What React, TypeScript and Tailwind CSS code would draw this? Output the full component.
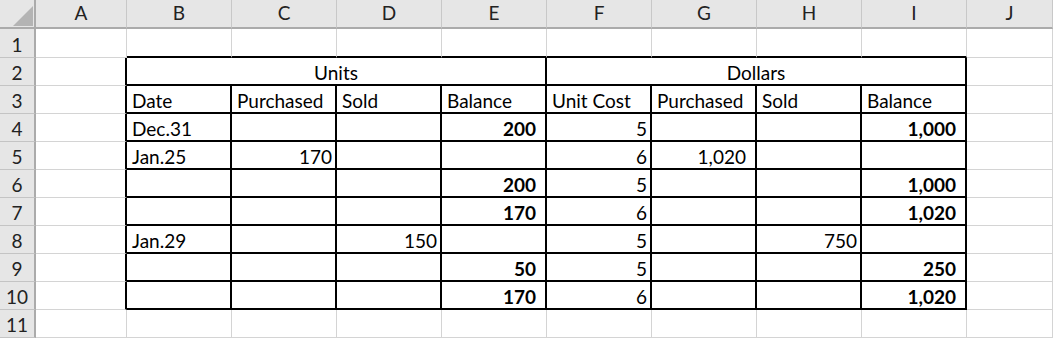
import clsx from 'clsx'

type Cell = { v: string; a: 'l' | 'r'; b?: boolean; wide?: boolean } | null

const COLS = ['A', 'B', 'C', 'D', 'E', 'F', 'G', 'H', 'I', 'J']

const L = (v: string): Cell => ({ v, a: 'l' })
const R = (v: string): Cell => ({ v, a: 'r' })
// comma-formatted numbers sit further from the right edge
const C = (v: string): Cell => ({ v, a: 'r', wide: true })
const B = (v: string): Cell => ({ v, a: 'r', b: true, wide: true })
const _ = null

// rows 3..10, columns B..I
const BODY: Cell[][] = [
  [L('Date'), L('Purchased'), L('Sold'), L('Balance'), L('Unit Cost'), L('Purchased'), L('Sold'), L('Balance')],
  [L('Dec.31'), _, _, B('200'), R('5'), _, _, B('1,000')],
  [L('Jan.25'), R('170'), _, _, R('6'), C('1,020'), _, _],
  [_, _, _, B('200'), R('5'), _, _, B('1,000')],
  [_, _, _, B('170'), R('6'), _, _, B('1,020')],
  [L('Jan.29'), _, R('150'), _, R('5'), _, R('750'), _],
  [_, _, _, B('50'), R('5'), _, _, B('250')],
  [_, _, _, B('170'), R('6'), _, _, B('1,020')],
]

function gridCell(r: number, c: number) {
  // c: 0 = column A ... 9 = column J
  const rightBlack = r >= 2 && r <= 10 && c >= 0 && c <= 8
  const bottomBlack = r >= 1 && r <= 10 && c >= 1 && c <= 8
  return clsx(
    'flex items-end min-w-0 overflow-hidden whitespace-nowrap pb-[1px]',
    rightBlack ? 'border-r-2 border-r-black' : 'border-r border-r-[#d4d4d4]',
    bottomBlack ? 'border-b-2 border-b-black' : 'border-b border-b-[#d4d4d4]'
  )
}

function CellBox({ r, c, cell }: { r: number; c: number; cell: Cell }) {
  return (
    <div
      className={clsx(
        gridCell(r, c),
        cell?.a === 'r' && 'justify-end',
        cell?.a === 'r' && (cell.wide ? 'pr-[9px]' : 'pr-[3px]'),
        cell?.a === 'l' && 'pl-[5px]'
      )}
    >
      {cell && <span className={clsx('leading-[20px]', cell.b && 'font-bold')}>{cell.v}</span>}
    </div>
  )
}

function RowHead({ n }: { n: number }) {
  return (
    <div className="flex items-end justify-center pb-[2px] bg-[#e6e6e6] border-r-2 border-r-[#ababab] border-b border-b-[#c4c4c4] text-[#222]">
      <span className="leading-[20px]">{n}</span>
    </div>
  )
}

export default function App() {
  const rows: React.ReactNode[] = []

  for (let r = 1; r <= 11; r++) {
    rows.push(<RowHead key={`h${r}`} n={r} />)
    if (r === 2) {
      rows.push(<CellBox key="a2" r={2} c={0} cell={null} />)
      rows.push(
        <div key="units" className="col-span-4 flex items-end justify-center pb-[1px] border-r-2 border-r-black border-b-2 border-b-black">
          <span className="leading-[20px]">Units</span>
        </div>
      )
      rows.push(
        <div key="dollars" className="col-span-4 flex items-end justify-center pb-[1px] border-r-2 border-r-black border-b-2 border-b-black">
          <span className="leading-[20px]">Dollars</span>
        </div>
      )
      rows.push(<CellBox key="j2" r={2} c={9} cell={null} />)
      continue
    }
    for (let c = 0; c <= 9; c++) {
      const cell = r >= 3 && r <= 10 && c >= 1 && c <= 8 ? BODY[r - 3][c - 1] : null
      rows.push(<CellBox key={`${r}-${c}`} r={r} c={c} cell={cell} />)
    }
  }

  return (
    <div className="w-[1053px] h-[338px] overflow-hidden bg-white text-black text-[19px] font-['Lato',sans-serif]">
      <div className="grid grid-cols-[36px_91px_repeat(8,105px)_1fr] grid-rows-[29px_29px_repeat(10,28px)]">
        {/* corner */}
        <div className="bg-[#e6e6e6] border-r-2 border-r-[#ababab] border-b-2 border-b-[#ababab] relative">
          <svg width="34" height="27" className="absolute left-0 top-0">
            <polygon points="33,6 33,26 13,26" fill="#b4b4b4" />
          </svg>
        </div>
        {COLS.map((col) => (
          <div
            key={col}
            className="flex items-end justify-center pb-[4px] bg-[#e6e6e6] border-r border-r-[#c8c8c8] border-b-2 border-b-[#ababab] text-[#222]"
          >
            <span className="leading-[20px]">{col}</span>
          </div>
        ))}
        {rows}
      </div>
    </div>
  )
}
